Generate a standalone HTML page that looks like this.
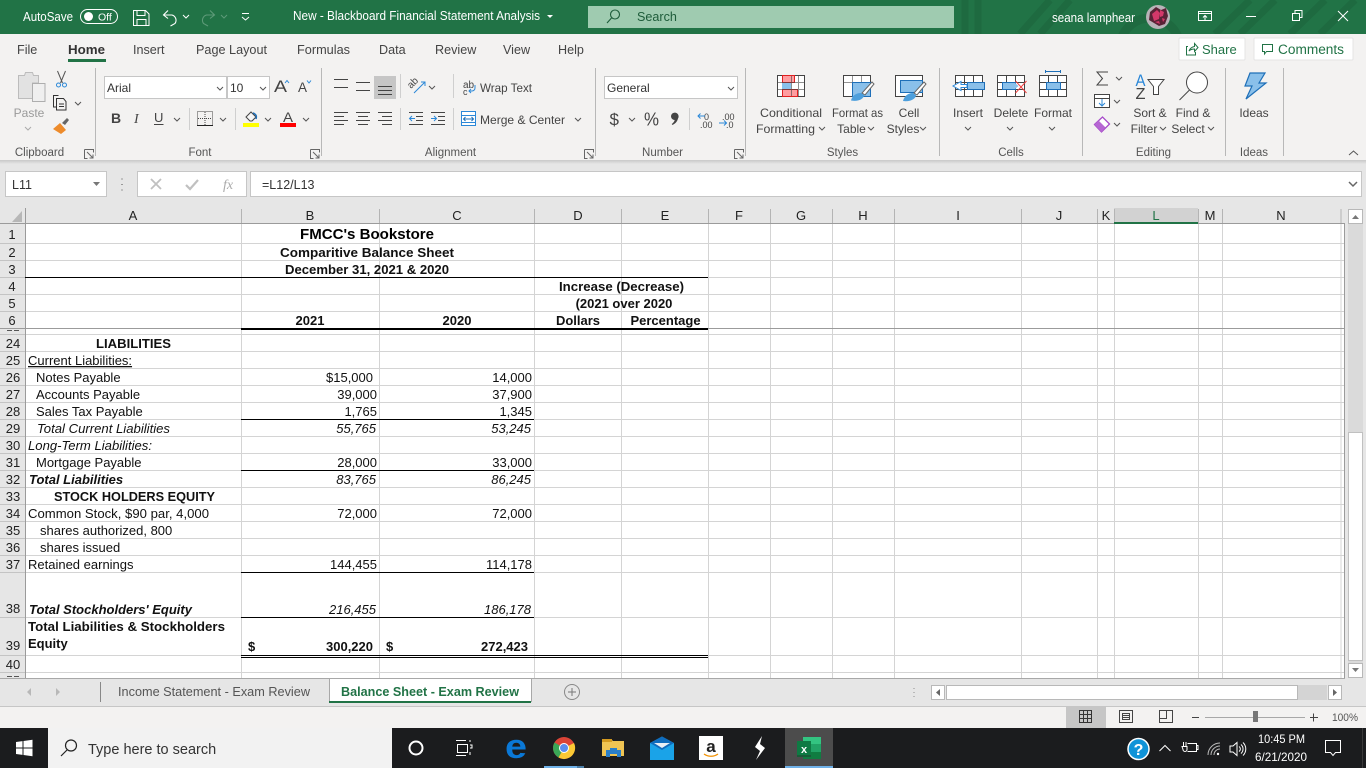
<!DOCTYPE html>
<html><head><meta charset="utf-8"><title>Excel</title>
<style>
html,body{margin:0;padding:0;background:#f3f2f1;width:1366px;height:768px;overflow:hidden}
svg{display:block;font-family:"Liberation Sans",Arial,sans-serif}
.r{font-size:12px;fill:#444}
.m{text-anchor:middle}
.g{font-size:11.5px;fill:#555;text-anchor:middle}
.t{font-size:12.6px;fill:#444}
.c{font-size:13px;fill:#111}
.b{font-weight:bold}
.i{font-style:italic}
.e{text-anchor:end}
.h{font-size:13px;fill:#222;text-anchor:middle}
.ln{fill:none;stroke:#444;stroke-width:1}
.bl{fill:none;stroke:#2b88d8;stroke-width:1}
.ch{fill:none;stroke:#555;stroke-width:1}
</style></head><body>
<svg width="1366" height="768" viewBox="0 0 1366 768" xmlns="http://www.w3.org/2000/svg">
<defs>
<path id="v" d="M0 0l3 3 3-3" fill="none" stroke="#555" stroke-width="1"/>
<path id="launch" d="M.5 .5h9v3M.5 .5v9h3M3 3l6 6M9 5.500v3.500h-3.500" fill="none" stroke="#666" stroke-width="1"/>
<linearGradient id="sh" x1="0" y1="0" x2="0" y2="1"><stop offset="0" stop-color="#c8c8c8"/><stop offset="1" stop-color="#e6e6e6"/></linearGradient>
</defs>

<!-- title bar -->
<rect width="1366" height="34" fill="#217346"/>
<g fill="none" stroke="#1e6a40" stroke-width="7">
<path d="M965 34V0M978 34V0M1020 34L1050 0M1040 34L1070 0M1215 34L1250 0M1240 34L1275 0M1290 34L1325 0M1320 34L1355 0"/>
<circle cx="1150" cy="48" r="30" stroke-width="9"/>
</g>
<text x="23" y="21" font-size="12.600" fill="#fff" textLength="50" lengthAdjust="spacingAndGlyphs">AutoSave</text>
<rect x="80.500" y="9.500" width="37" height="14" rx="7" fill="none" stroke="#fff"/>
<circle cx="88.500" cy="16.500" r="4.500" fill="#fff"/>
<text x="98" y="20.500" font-size="10.500" fill="#fff">Off</text>
<path d="M133.500 10.500h12l3.500 3.500v11.500h-15.500zM137 10.500v5h8v-5M137 25.500v-6h9v6" fill="none" stroke="#fff"/>
<path d="M168 10.500l-4.500 4.500 4.500 3.500M164 15h8a5.500 5.500 0 0 1 3 8.500l-4.500 2.500" fill="none" stroke="#fff" stroke-width="1.100"/>
<path d="M183 15l3 3 3-3" fill="none" stroke="#fff"/>
<path d="M210 10.500l4.500 4.500-4.500 3.500M214.500 15h-8a5.500 5.500 0 0 0-3 8.500l4.500 2.500" fill="none" stroke="#5d9a78" stroke-width="1.100"/>
<path d="M221 15l3 3 3-3" fill="none" stroke="#5d9a78"/>
<path d="M242 13.500h7M242 17l3.500 3 3.500-3" fill="none" stroke="#fff"/>
<text x="293" y="20" font-size="12.600" fill="#fff" textLength="247" lengthAdjust="spacingAndGlyphs">New - Blackboard Financial Statement Analysis</text>
<path d="M547 15h6l-3 3z" fill="#fff"/>
<rect x="588" y="6" width="366" height="22" fill="#9fcbb0"/>
<circle cx="615" cy="14.500" r="4.500" fill="none" stroke="#1e5c3a" stroke-width="1.100"/><path d="M611.500 18l-4.500 5" stroke="#1e5c3a" stroke-width="1.100"/>
<text x="637" y="21" font-size="12.600" fill="#1e5c3a">Search</text>
<text x="1052" y="22" font-size="12.600" fill="#fff" textLength="83" lengthAdjust="spacingAndGlyphs">seana lamphear</text>
<circle cx="1158" cy="17" r="12" fill="#b8b3b8"/>
<path d="M1150 12l6-5 5 3 5-2 2 8-3 8-6 2-5-3-5-3z" fill="#5a2236"/>
<path d="M1152 14l5-4 3 3-1 6-5 2zM1160 10l4 2-1 4-3 1zM1155 22l4-1 1 3zM1162 18l3 1-2 3z" fill="#d4386a"/>
<rect x="1198.500" y="11.500" width="13" height="9" fill="none" stroke="#fff"/><path d="M1198.500 13.500h13M1205 20v-4M1203 17.500l2-2 2 2" fill="none" stroke="#fff"/>
<path d="M1246 16.500h10" stroke="#fff"/>
<path d="M1292.500 13.500h7v7h-7zM1295 13v-2.500h7v7h-2.500" fill="none" stroke="#fff"/>
<path d="M1338 11l10 10M1348 11l-10 10" stroke="#fff" fill="none"/>

<!-- ribbon -->
<rect y="34" width="1366" height="126" fill="#f3f2f1"/>
<rect y="160" width="1366" height="48" fill="#e6e6e6"/>
<rect y="160" width="1366" height="4" fill="url(#sh)"/>
<g class="t">
<text x="17" y="54">File</text><text x="68" y="54" style="fill:#333;font-weight:bold" textLength="37" lengthAdjust="spacingAndGlyphs">Home</text>
<text x="133" y="54">Insert</text><text x="196" y="54" textLength="71" lengthAdjust="spacingAndGlyphs">Page Layout</text><text x="297" y="54" textLength="53" lengthAdjust="spacingAndGlyphs">Formulas</text><text x="379" y="54">Data</text><text x="435" y="54">Review</text><text x="503" y="54">View</text><text x="558" y="54">Help</text>
</g>
<rect x="68" y="59" width="38" height="3" fill="#217346"/>
<rect x="1179" y="38" width="66" height="22" rx="1" fill="#fff" stroke="#e4e4e4"/>
<path d="M1188 46.500h-1.500v8.500h9v-3M1189 51c1-3 3-4 5.500-4.500v-3l3.500 4-3.500 4v-2.500c-2 0-4 .5-5.500 2z" fill="none" stroke="#217346"/>
<text x="1202" y="54" font-size="13" fill="#217346">Share</text>
<rect x="1254" y="38" width="99" height="22" rx="1" fill="#fff" stroke="#e4e4e4"/>
<path d="M1262.500 44.500h10v7h-6l-2 2.500v-2.500h-2z" fill="none" stroke="#217346"/>
<text x="1278" y="54" font-size="13.400" fill="#217346" textLength="66" lengthAdjust="spacingAndGlyphs">Comments</text>

<!-- separators -->
<path d="M95.500 68v88M321.500 68v88M595.500 68v88M745.500 68v88M939.500 68v88M1082.500 68v88M1225.500 68v88M1283.500 68v88" stroke="#b8b8b8"/>
<path d="M400.500 74v24M400.500 108v22M453.500 74v24M453.500 108v22M189.500 108v22M235.500 108v22M689.500 108v22" stroke="#cfcfcf"/>
<!-- labels -->
<text x="39.500" y="156" class="g">Clipboard</text><text x="200" y="156" class="g">Font</text><text x="450.500" y="156" class="g">Alignment</text><text x="662.500" y="156" class="g">Number</text><text x="842.500" y="156" class="g">Styles</text><text x="1011" y="156" class="g">Cells</text><text x="1153.500" y="156" class="g">Editing</text><text x="1254" y="156" class="g">Ideas</text>
<use href="#launch" x="84" y="149"/><use href="#launch" x="310" y="149"/><use href="#launch" x="584" y="149"/><use href="#launch" x="734" y="149"/>
<path d="M1349 155l4.500-4 4.500 4" fill="none" stroke="#555"/>

<!-- clipboard -->
<path d="M18.500 75.500h6l1-3h7l1 3h5v7.500h-6v15.500h-14z" fill="#e2e2e2" stroke="#bcbcbc"/>
<rect x="32.500" y="83.500" width="12.500" height="18" fill="#efefef" stroke="#aeaeae"/>
<text x="29" y="117" class="m" font-size="12" fill="#9a9a9a">Paste</text>
<path d="M25 127l3 3 3-3" fill="none" stroke="#aaa"/>
<path d="M57.500 71l5 12M65.500 71l-5 12" stroke="#555" fill="none"/><circle cx="58.500" cy="85" r="2" fill="none" stroke="#2b88d8"/><circle cx="64.500" cy="85" r="2" fill="none" stroke="#2b88d8"/>
<path d="M53.500 95.500h5M53.500 95v12h3M56.500 98.500h7l2.500 3v8.500h-9.500zM59 104h5M59 106.500h5" fill="none" stroke="#333"/>
<use href="#v" x="75" y="102"/>
<path d="M53 129l7-6 6 7-5 4z" fill="#ed8b2b"/><path d="M62 123l5-5 2 2-4 5z" fill="#666"/>

<!-- font -->
<rect x="104.500" y="76.500" width="122" height="22" fill="#fff" stroke="#c6c6c6"/>
<rect x="227.500" y="76.500" width="42" height="22" fill="#fff" stroke="#c6c6c6"/>
<text x="107" y="92" font-size="12" fill="#333">Arial</text><text x="230" y="92" font-size="12" fill="#333">10</text>
<use href="#v" x="217" y="87"/><use href="#v" x="260" y="87"/>
<text x="274" y="92" font-size="17" fill="#444" textLength="13" lengthAdjust="spacingAndGlyphs">A</text><path d="M285 83l2-2.500 2 2.500" fill="none" stroke="#2b88d8"/>
<text x="298" y="92" font-size="14" fill="#444" textLength="9" lengthAdjust="spacingAndGlyphs">A</text><path d="M307 80.500l2 2.500 2-2.500" fill="none" stroke="#2b88d8"/>
<text x="111" y="123" font-size="14" font-weight="bold" fill="#444">B</text>
<text x="134" y="123" font-size="14" font-style="italic" fill="#444" font-family="Liberation Serif">I</text>
<text x="154" y="122" font-size="13" fill="#444">U</text><path d="M154 124.500h9.500" stroke="#444"/>
<use href="#v" x="174" y="118"/>
<path d="M197.500 111.500h15v14h-15z" fill="none" stroke="#444" stroke-dasharray="1 1"/><path d="M205 112v13M198 118.500h14" stroke="#444" stroke-dasharray="1 1"/><path d="M197 125.500h16" stroke="#222"/>
<use href="#v" x="220" y="118"/>
<path d="M246 117l5-5 5 5-4 4h-2z" fill="#f6f6f6" stroke="#444"/><path d="M253 113c3 1 4 3 3 6" fill="none" stroke="#1e6fb8" stroke-width="1.500"/>
<rect x="243" y="123" width="16" height="4" fill="#ffff00"/>
<use href="#v" x="265" y="118"/>
<text x="283" y="122" font-size="14" fill="#444" textLength="10" lengthAdjust="spacingAndGlyphs">A</text><rect x="280" y="123" width="16" height="4" fill="#ff0000"/>
<use href="#v" x="303" y="118"/>

<!-- align -->
<g class="ln">
<path d="M334 79.500h14M336 83.500h10M334 87.500h14" opacity=".0"/>
<path d="M334 79.500h14M334 87.500h14"/>
<path d="M356 82.500h14M356 90.500h14"/>
</g>
<rect x="374" y="76" width="22" height="23" fill="#c6c6c6"/>
<path class="ln" d="M378 86.500h14M378 90.500h14M378 94.500h14"/>
<path class="ln" d="M334 112.500h14M334 116.500h10M334 120.500h14M334 124.500h10"/>
<path class="ln" d="M356 112.500h14M358 116.500h10M356 120.500h14M358 124.500h10"/>
<path class="ln" d="M378 112.500h14M382 116.500h10M378 120.500h14M382 124.500h10"/>
<path class="ln" d="M409 112.500h14M416 116.500h7M416 120.500h7M409 124.500h14"/><path class="bl" d="M415 118.500h-5M412 116l-2.500 2.500 2.500 2.500"/>
<path class="ln" d="M431 112.500h14M438 116.500h7M438 120.500h7M431 124.500h14"/><path class="bl" d="M431 118.500h5M434 116l2.500 2.500-2.500 2.500"/>
<text x="411" y="89" font-size="10" fill="#444" transform="rotate(-45 411 89)">ab</text><path class="bl" d="M414 93l11-11M421 82h4v4"/>
<use href="#v" x="429" y="86"/>
<text x="463" y="88" font-size="10" fill="#444">ab</text><text x="463" y="95" font-size="9" fill="#444">c</text><path class="bl" d="M475 85v3a3 3 0 0 1-3 3h-3M471 89l-2 2 2 2"/>
<text x="480" y="92" class="r" textLength="52" lengthAdjust="spacingAndGlyphs">Wrap Text</text>
<rect x="461.500" y="111.500" width="14" height="14" fill="#fff" stroke="#2b88d8"/><path class="bl" d="M462 115.500h13M462 122.500h13"/><path d="M464 119h9M465.500 117l-2 2 2 2M471.500 117l2 2-2 2" fill="none" stroke="#1e6fb8"/>
<text x="480" y="124" class="r" textLength="85" lengthAdjust="spacingAndGlyphs">Merge &amp; Center</text>
<use href="#v" x="575" y="118"/>

<!-- number -->
<rect x="604.500" y="76.500" width="133" height="22" fill="#fff" stroke="#c6c6c6"/>
<text x="607" y="92" font-size="12" fill="#333">General</text><use href="#v" x="728" y="87"/>
<text x="609.500" y="125" font-size="17" fill="#444">$</text><use href="#v" x="629" y="118"/>
<text x="644" y="125.500" font-size="18" fill="#444" textLength="15" lengthAdjust="spacingAndGlyphs">%</text>
<path d="M671 116.500a3.800 3.800 0 1 1 7 2c-.8 3-2.500 5-5.500 6.500l-.8-1c1.500-1 2.500-2.300 3-4a3.800 3.800 0 0 1-3.700-3.500z" fill="#444"/>
<text x="704" y="120" font-size="9" fill="#444">0</text><text x="700" y="128" font-size="9" fill="#444">.00</text><path class="bl" d="M705 116h-7M700.500 113.500l-2.500 2.500 2.500 2.500"/>
<text x="722" y="120" font-size="9" fill="#444">.00</text><text x="726" y="128" font-size="9" fill="#444">.0</text><path class="bl" d="M719 123h8M724 120.500l2.500 2.500-2.500 2.500"/>

<!-- styles -->
<g>
<rect x="777.500" y="75.500" width="27" height="21" fill="#fff" stroke="#444"/>
<rect x="782.500" y="75.500" width="12" height="7" fill="#ff9da0" stroke="#e02020"/><rect x="782" y="83" width="9" height="6" fill="#8ac0ea"/><rect x="782.500" y="89.500" width="15" height="7" fill="#ff9da0" stroke="#e02020"/>
<path d="M777 82.500h28M777 89.500h28M791.500 76v20M798.500 76v20" stroke="#444" fill="none" opacity=".6"/>
</g>
<g>
<rect x="843.500" y="75.500" width="27" height="21" fill="#fff" stroke="#444"/><rect x="852.500" y="82.500" width="18" height="14" fill="#8ac0ea" stroke="#1e6fb8"/>
<path d="M844 82.500h8M852.500 76v6M861.500 76v6" stroke="#666" fill="none" opacity=".7"/>
<path d="M872 82l2 2-9 11-3-2z" fill="#fff" stroke="#666"/><path d="M851 100.500c1-4 4-7.500 10-7.500l3 2c0 4-6 7-13 5.500z" fill="#4d9fdc"/>
</g>
<g>
<rect x="895.500" y="75.500" width="27" height="21" fill="#fff" stroke="#444"/><rect x="900.500" y="80.500" width="22" height="12" fill="#8ac0ea" stroke="#1e6fb8"/>
<path d="M924 82l2 2-9 11-3-2z" fill="#fff" stroke="#666"/><path d="M903 101c1-4 4-8 10-8l3 2c0 4-6 7-13 6z" fill="#4d9fdc"/>
</g>
<g class="r m"><text x="791" y="117" textLength="62" lengthAdjust="spacingAndGlyphs">Conditional</text><text x="785.500" y="133" textLength="59" lengthAdjust="spacingAndGlyphs">Formatting</text><text x="857.500" y="117" textLength="51" lengthAdjust="spacingAndGlyphs">Format as</text><text x="851.500" y="133">Table</text><text x="909" y="117">Cell</text><text x="903" y="133">Styles</text></g>
<use href="#v" x="819" y="127"/><use href="#v" x="868" y="127"/><use href="#v" x="920" y="127"/>

<!-- cells -->
<g fill="none" stroke="#444">
<rect x="955.500" y="75.500" width="27" height="21" fill="#fff"/><path d="M955 82.500h28M955 89.500h28M964.500 76v20M973.500 76v20"/>
<rect x="997.500" y="75.500" width="27" height="21" fill="#fff"/><path d="M997 82.500h28M997 89.500h28M1006.500 76v20M1015.500 76v20"/>
<rect x="1039.500" y="75.500" width="27" height="21" fill="#fff"/><path d="M1039 82.500h28M1039 89.500h28M1048.500 76v20M1057.500 76v20"/>
</g>
<rect x="967.500" y="82.500" width="17" height="7" fill="#8ac0ea" stroke="#1e6fb8"/><path d="M967 84.500h-6v-3l-8 4.500 8 4.500v-3h6z" fill="#fff" stroke="#2b88d8"/>
<rect x="1002.500" y="82.500" width="13" height="7" fill="#8ac0ea" stroke="#1e6fb8"/><path d="M1015 83l3.500 3-3.500 3z" fill="#8ac0ea"/><path d="M1015.500 81l11 12M1026.500 81l-11 12" fill="none" stroke="#f04040"/>
<rect x="1046.500" y="82.500" width="14" height="7" fill="#8ac0ea" stroke="#1e6fb8"/><path d="M1045.500 71.500h15M1045.500 70v3M1060.500 70v3" stroke="#1e6fb8" fill="none"/>
<g class="r m"><text x="968" y="117">Insert</text><text x="1011" y="117">Delete</text><text x="1053" y="117">Format</text></g>
<use href="#v" x="965" y="127"/><use href="#v" x="1007" y="127"/><use href="#v" x="1049" y="127"/>

<!-- editing -->
<path d="M1108 72h-11l5.500 6.500-5.500 6.500h11" fill="none" stroke="#444"/><use href="#v" x="1116" y="77"/>
<rect x="1094.500" y="94.500" width="15" height="13" fill="#fff" stroke="#444"/><path d="M1095 98.500h14" stroke="#444"/><path class="bl" d="M1102 99v7M1099 103l3 3 3-3"/><use href="#v" x="1114" y="100"/>
<path d="M1094.500 124.500l8-7.500 7 7-8 8z" fill="#fff" stroke="#a64ac9" stroke-width="1.300"/><path d="M1094.500 124.500l4-4 7 7-4 4.500z" fill="#b667d3"/><use href="#v" x="1114" y="123"/>
<text x="1135.500" y="86" font-size="17" fill="#2b88d8" textLength="10" lengthAdjust="spacingAndGlyphs">A</text><text x="1135.500" y="99" font-size="16" fill="#444" textLength="10" lengthAdjust="spacingAndGlyphs">Z</text>
<path d="M1148 79.500h16l-5.500 7v8h-5v-8z" fill="#fff" stroke="#444"/>
<circle cx="1197" cy="82.500" r="10.500" fill="#fff" stroke="#444"/><path d="M1189.500 90l-10 10" stroke="#444"/>
<g class="r m"><text x="1150" y="117">Sort &amp;</text><text x="1144" y="133">Filter</text><text x="1193" y="117">Find &amp;</text><text x="1188" y="133">Select</text></g>
<use href="#v" x="1160" y="127"/><use href="#v" x="1208" y="127"/>
<!-- ideas -->
<path d="M1250 73h15l-6 10h7l-20 16 6-13h-7z" fill="#8ac0ea" stroke="#1e6fb8" stroke-width="1.200"/>
<text x="1254" y="117" class="r m">Ideas</text>

<!-- formula bar -->
<rect x="5.500" y="171.500" width="101" height="25" fill="#fff" stroke="#c6c6c6"/>
<text x="12" y="189" font-size="12.500" fill="#333">L11</text><path d="M93 182h7l-3.500 4z" fill="#777"/>
<path d="M122 178.500v1M122 184v1M122 189.500v1" stroke="#999" stroke-width="2"/>
<rect x="137.500" y="171.500" width="109" height="25" fill="#fff" stroke="#c6c6c6"/>
<path d="M151 179l10 10M161 179l-10 10" stroke="#c0c0c0" stroke-width="1.800"/>
<path d="M186 185l4 4 8-9" fill="none" stroke="#c0c0c0" stroke-width="2.200"/>
<text x="223" y="189" font-family="Liberation Serif" font-style="italic" font-size="14" fill="#aaa">fx</text>
<rect x="250.500" y="171.500" width="1111" height="25" fill="#fff" stroke="#c6c6c6"/>
<text x="262" y="189" font-size="12.500" fill="#333">=L12/L13</text>
<path d="M1349 182l4 4 4-4" fill="none" stroke="#666" stroke-width="1.500"/>

<!-- sheet -->
<rect x="0" y="208" width="1345" height="470" fill="#fff"/>
<rect x="0" y="208" width="1345" height="15" fill="#e6e6e6"/>
<rect x="0" y="208" width="25" height="470" fill="#e6e6e6"/>
<rect x="1114" y="208" width="84" height="15" fill="#d2d2d2"/>
<path d="M22 211v11H12z" fill="#b7b7b7"/>
<!-- grid -->
<path stroke="#d4d4d4" fill="none" d="M241.500 223V678M379.500 223V678M534.500 223V678M621.500 223V678M708.500 223V678M770.500 223V678M832.500 223V678M894.500 223V678M1021.500 223V678M1097.500 223V678M1114.500 223V678M1198.500 223V678M1222.500 223V678M1341 223V678
M25 243.500H1344M25 260.500H1344M25 277.500H1344M25 294.500H1344M25 311.500H1344M25 334.500H1344M25 351.500H1344M25 368.500H1344M25 385.500H1344M25 402.500H1344M25 419.500H1344M25 436.500H1344M25 453.500H1344M25 470.500H1344M25 487.500H1344M25 504.500H1344M25 521.500H1344M25 538.500H1344M25 555.500H1344M25 572.500H1344M25 617.500H1344M25 655.500H1344M25 672.500H1344"/>
<!-- header separators -->
<path stroke="#b4b4b4" fill="none" d="M241.500 209V223M379.500 209V223M534.500 209V223M621.500 209V223M708.500 209V223M770.500 209V223M832.500 209V223M894.500 209V223M1021.500 209V223M1097.500 209V223M1114.500 209V223M1198.500 209V223M1222.500 209V223M1341 209V223"/>
<path stroke="#c4c4c4" fill="none" d="M0 243.500H25M0 260.500H25M0 277.500H25M0 294.500H25M0 311.500H25M0 334.500H25M0 351.500H25M0 368.500H25M0 385.500H25M0 402.500H25M0 419.500H25M0 436.500H25M0 453.500H25M0 470.500H25M0 487.500H25M0 504.500H25M0 521.500H25M0 538.500H25M0 555.500H25M0 572.500H25M0 617.500H25M0 655.500H25M0 672.500H25"/>
<path stroke="#9b9b9b" fill="none" d="M25.500 208V678M0 223.500H1344M1344.500 223V678M0 328.500H1344"/>
<rect x="1114" y="222" width="84" height="2" fill="#217346"/>
<path d="M7 330.500h5M14 330.500h5M7 676.500h5M14 676.500h5" stroke="#555" fill="none"/>
<!-- black borders -->
<path stroke="#000" fill="none" d="M25 277.500H708M241 419.500H534M241 470.500H534M241 572.500H534M241 617.500H534M241 655.500H708M241 657.500H708"/>
<rect x="241" y="328" width="467" height="2" fill="#000"/>

<!-- column headers -->
<g class="h"><text x="133" y="220">A</text><text x="310" y="220">B</text><text x="457" y="220">C</text><text x="578" y="220">D</text><text x="665" y="220">E</text><text x="739" y="220">F</text><text x="801" y="220">G</text><text x="863" y="220">H</text><text x="958" y="220">I</text><text x="1059" y="220">J</text><text x="1106" y="220">K</text><text x="1156" y="220" style="fill:#217346">L</text><text x="1210" y="220">M</text><text x="1281" y="220">N</text></g>
<!-- row headers -->
<g class="h"><text x="12" y="239">1</text><text x="12" y="257">2</text><text x="12" y="274">3</text><text x="12" y="291">4</text><text x="12" y="308">5</text><text x="12" y="325">6</text>
<text x="13" y="348">24</text><text x="13" y="365">25</text><text x="13" y="382">26</text><text x="13" y="399">27</text><text x="13" y="416">28</text><text x="13" y="433">29</text><text x="13" y="450">30</text><text x="13" y="467">31</text><text x="13" y="484">32</text><text x="13" y="501">33</text><text x="13" y="518">34</text><text x="13" y="535">35</text><text x="13" y="552">36</text><text x="13" y="569">37</text><text x="13" y="613">38</text><text x="13" y="650">39</text><text x="13" y="669">40</text></g>

<!-- cells -->
<text x="367" y="239" class="m b" font-size="14.600" fill="#000" textLength="134" lengthAdjust="spacingAndGlyphs">FMCC's Bookstore</text>
<g class="c b m">
<text x="367" y="257" textLength="174" lengthAdjust="spacingAndGlyphs">Comparitive Balance Sheet</text>
<text x="367" y="274" textLength="164" lengthAdjust="spacingAndGlyphs">December 31, 2021 &amp; 2020</text>
<text x="621.500" y="291" textLength="125" lengthAdjust="spacingAndGlyphs">Increase (Decrease)</text>
<text x="624" y="308">(2021 over 2020</text>
<text x="310" y="325">2021</text><text x="457" y="325">2020</text><text x="578" y="325">Dollars</text><text x="665.500" y="325">Percentage</text>
<text x="133.500" y="348" textLength="75" lengthAdjust="spacingAndGlyphs">LIABILITIES</text>
<text x="134.500" y="501" textLength="161" lengthAdjust="spacingAndGlyphs">STOCK HOLDERS EQUITY</text>
</g>
<g class="c">
<text x="28" y="365" text-decoration="underline">Current Liabilities:</text>
<text x="36" y="382">Notes Payable</text><text x="36" y="399">Accounts Payable</text><text x="36" y="416">Sales Tax Payable</text>
<text x="37" y="433" class="i" textLength="133" lengthAdjust="spacingAndGlyphs">Total Current Liabilities</text>
<text x="28" y="450" class="i" textLength="124" lengthAdjust="spacingAndGlyphs">Long-Term Liabilities:</text>
<text x="36" y="467">Mortgage Payable</text>
<text x="29" y="484" class="i b">Total Liabilities</text>
<text x="28" y="518" textLength="181" lengthAdjust="spacingAndGlyphs">Common Stock, $90 par, 4,000</text>
<text x="40" y="535">shares authorized, 800</text><text x="40" y="552">shares issued</text>
<text x="28" y="569">Retained earnings</text>
<text x="29" y="614" class="i b">Total Stockholders' Equity</text>
<text x="28" y="631" class="b" textLength="197" lengthAdjust="spacingAndGlyphs">Total Liabilities &amp; Stockholders</text>
<text x="28" y="648" class="b">Equity</text>
</g>
<g class="c e">
<text x="373" y="382">$15,000</text><text x="532" y="382">14,000</text>
<text x="377" y="399">39,000</text><text x="532" y="399">37,900</text>
<text x="377" y="416">1,765</text><text x="532" y="416">1,345</text>
<text x="376" y="433" class="i">55,765</text><text x="531" y="433" class="i">53,245</text>
<text x="377" y="467">28,000</text><text x="532" y="467">33,000</text>
<text x="376" y="484" class="i">83,765</text><text x="531" y="484" class="i">86,245</text>
<text x="377" y="518">72,000</text><text x="532" y="518">72,000</text>
<text x="377" y="569">144,455</text><text x="532" y="569">114,178</text>
<text x="376" y="614" class="i">216,455</text><text x="531" y="614" class="i">186,178</text>
<text x="373" y="651" class="b">300,220</text><text x="528" y="651" class="b">272,423</text>
</g>
<g class="c b"><text x="248" y="651">$</text><text x="386" y="651">$</text></g>

<!-- vertical scrollbar -->
<rect x="1345" y="208" width="21" height="470" fill="#e6e6e6"/>
<rect x="1348" y="223" width="15" height="440" fill="#dadada"/>
<rect x="1348.500" y="432.500" width="14" height="228" fill="#fff" stroke="#c0c0c0"/>
<rect x="1348.500" y="209.500" width="14" height="14" fill="#fff" stroke="#b8b8b8"/><path d="M1352 219h7l-3.500-4z" fill="#777"/>
<rect x="1348.500" y="663.500" width="14" height="14" fill="#fff" stroke="#b8b8b8"/><path d="M1352 668h7l-3.500 4z" fill="#777"/>

<!-- sheet tabs -->
<rect y="678" width="1366" height="28" fill="#e6e6e6"/>
<path d="M0 678.500H329M531 678.500H1345" stroke="#a8a8a8"/>
<path d="M0 706.500H1366" stroke="#c6c6c6"/>
<path d="M31 688v8l-4-4zM56 688v8l4-4z" fill="#b8b8b8"/>
<path d="M100.500 682v20" stroke="#888"/>
<text x="118" y="696" font-size="12.600" fill="#555" textLength="192" lengthAdjust="spacingAndGlyphs">Income Statement - Exam Review</text>
<path d="M329.500 702V678.500H531.500V702" fill="#fff" stroke="#a8a8a8"/>
<rect x="329" y="701" width="202" height="2" fill="#217346"/>
<text x="341" y="696" font-size="12.600" font-weight="bold" fill="#217346" textLength="178" lengthAdjust="spacingAndGlyphs">Balance Sheet - Exam Review</text>
<circle cx="572" cy="692" r="7.500" fill="none" stroke="#888"/><path d="M572 688v8M568 692h8" stroke="#777"/>
<path d="M914 688v1M914 692v1M914 696v1" stroke="#aaa" stroke-width="1.500"/>
<rect x="931.500" y="685.500" width="13" height="14" fill="#fff" stroke="#b8b8b8"/><path d="M940 689v7l-4-3.500z" fill="#666"/>
<rect x="946.500" y="685.500" width="351" height="14" fill="#fff" stroke="#b8b8b8"/>
<rect x="1298" y="685" width="29" height="15" fill="#d4d4d4"/>
<rect x="1328.500" y="685.500" width="13" height="14" fill="#fff" stroke="#b8b8b8"/><path d="M1333 689v7l4-3.500z" fill="#666"/>

<!-- status bar -->
<rect y="707" width="1366" height="21" fill="#f3f2f1"/>
<rect x="1066" y="707" width="40" height="21" fill="#c6c6c6"/>
<path d="M1079.500 710.500h12v12h-12zM1083.500 710v13M1087.500 710v13M1079 714.500h13M1079 718.500h13" fill="none" stroke="#333"/>
<path d="M1119.500 710.500h13v12h-13zM1122.500 713.500h7v6h-7zM1123 715.500h6M1123 717.500h6" fill="none" stroke="#444"/>
<path d="M1159.500 710.500h13v12h-13zM1159.500 718.500h7v-8" fill="none" stroke="#444"/>
<path d="M1192 717.500h7" stroke="#444"/>
<path d="M1205 717.500h100" stroke="#a8a8a8"/>
<rect x="1253" y="711" width="5" height="11" fill="#777"/>
<path d="M1310 717.500h8M1313.500 713.500v8" stroke="#444" fill="none"/>
<text x="1332" y="721" font-size="11" fill="#555" textLength="26" lengthAdjust="spacingAndGlyphs">100%</text>

<!-- taskbar -->
<rect y="728" width="1366" height="40" fill="#1b1c1e"/>
<path d="M16 742l6.500-.9v6.400h-6.500zM23.500 741l9-1.300v7.800h-9zM16 748.500h6.500v6.400l-6.500-.9zM23.500 748.500h9v7.800l-9-1.300z" fill="#fff"/>
<rect x="48" y="728" width="344" height="40" fill="#f2f2f2"/>
<circle cx="71" cy="745.500" r="5.500" fill="none" stroke="#222" stroke-width="1.200"/><path d="M67 750l-6 6" stroke="#222" stroke-width="1.200"/>
<text x="88" y="754" font-size="14.500" fill="#333">Type here to search</text>
<circle cx="416" cy="748" r="6.500" fill="none" stroke="#fff" stroke-width="2"/>
<path d="M456 740.500h10M457.500 744.500h10v8h-10zM456 755.500h10M470 740v2M470 745h2v3h-2M470 752v3" fill="none" stroke="#fff"/>
<text x="505" y="758" font-size="34" font-weight="bold" fill="#0a78d7" textLength="22" lengthAdjust="spacingAndGlyphs">e</text>
<!-- chrome -->
<circle cx="564" cy="748" r="11" fill="#db4437"/>
<path d="M564 748l-9.500-5.500A11 11 0 0 0 558.500 757.500z" fill="#3aa757"/>
<path d="M564 748l5.500 9.500A11 11 0 0 0 574 743z M564 748l-5.500 9.500A11 11 0 0 0 569.500 757.500z" fill="#fcc934"/>
<circle cx="564" cy="748" r="5" fill="#fff"/><circle cx="564" cy="748" r="4" fill="#5b8def"/>
<rect x="544" y="766" width="33" height="2" fill="#6fb1e8"/><rect x="577" y="766" width="7" height="2" fill="#4c7fa8"/>
<!-- explorer -->
<path d="M602 739h9l2 2h11v15h-22z" fill="#f0c453"/><rect x="602" y="739" width="10" height="3" fill="#d49a20"/><path d="M606 757v-7h4v-2h7v2h4v7h-4v-3h-7v3z" fill="#2a7fc9"/>
<!-- mail -->
<path d="M650 743l12-6.500 12 6.500v17h-24z" fill="#1aa3e8"/><path d="M650 743l12-6.500 12 6.500-12 7z" fill="#0f6cbd"/><path d="M654 743h16l-8 5z" fill="#e8eef5"/>
<!-- amazon -->
<rect x="699" y="736" width="24" height="24" fill="#fff"/>
<text x="711" y="752" class="m b" font-size="17" fill="#222">a</text><path d="M704 754c4 3 10 3 14 0" fill="none" stroke="#f29100" stroke-width="1.300"/>
<!-- bolt -->
<path d="M762 736l-7 11 5 4-4 9 9-12-5-4 2-8z" fill="#fff"/>
<!-- excel -->
<rect x="785" y="728" width="48" height="40" fill="#4c4c4c"/><rect x="785" y="766" width="48" height="2" fill="#6fb1e8"/>
<rect x="803" y="737" width="18" height="7" fill="#33c481"/><rect x="803" y="744" width="18" height="8" fill="#21a366"/><rect x="803" y="752" width="18" height="7" fill="#107c41"/><rect x="797" y="743" width="14" height="14" fill="#185c37"/><rect x="797" y="741" width="14" height="14" fill="#0e7a43"/>
<text x="804" y="753" class="m b" font-size="11" fill="#fff">x</text>
<!-- tray -->
<circle cx="1138.500" cy="749" r="10.500" fill="#0f93d8" stroke="#fff" stroke-width="1.500"/>
<text x="1138.500" y="755" class="m b" font-size="16" fill="#fff">?</text>
<path d="M1159.500 751l5.500-5.500 5.500 5.500" fill="none" stroke="#fff"/>
<path d="M1187.500 743.500h9v8h-9M1196.500 745.500h1.500v4h-1.500M1182 746.500h5v3a2 2 0 0 1-4 0zM1183.500 742v4M1186 742v4" fill="none" stroke="#fff"/>
<path d="M1208 755a12 12 0 0 1 12-12M1211 755a9 9 0 0 1 9-9M1214 755a6 6 0 0 1 6-6" fill="none" stroke="#bbb"/><circle cx="1218" cy="754" r="1.200" fill="#fff"/>
<path d="M1230 746v6h3l4 3.500v-13l-4 3.500zM1239 746.500a3 3 0 0 1 0 5M1241 744.500a6 6 0 0 1 0 9M1243 742.500a9 9 0 0 1 0 13" fill="none" stroke="#fff"/>
<text x="1281.500" y="743" class="m" font-size="12" fill="#fff" textLength="47" lengthAdjust="spacingAndGlyphs">10:45 PM</text>
<text x="1281" y="761" class="m" font-size="12" fill="#fff" textLength="52" lengthAdjust="spacingAndGlyphs">6/21/2020</text>
<path d="M1325.500 740.500h15v12h-5l-2.500 3-2.500-3h-5z" fill="none" stroke="#fff"/>
<path d="M1362.500 728v40" stroke="#3a3a3a"/>
</svg>
</body></html>
